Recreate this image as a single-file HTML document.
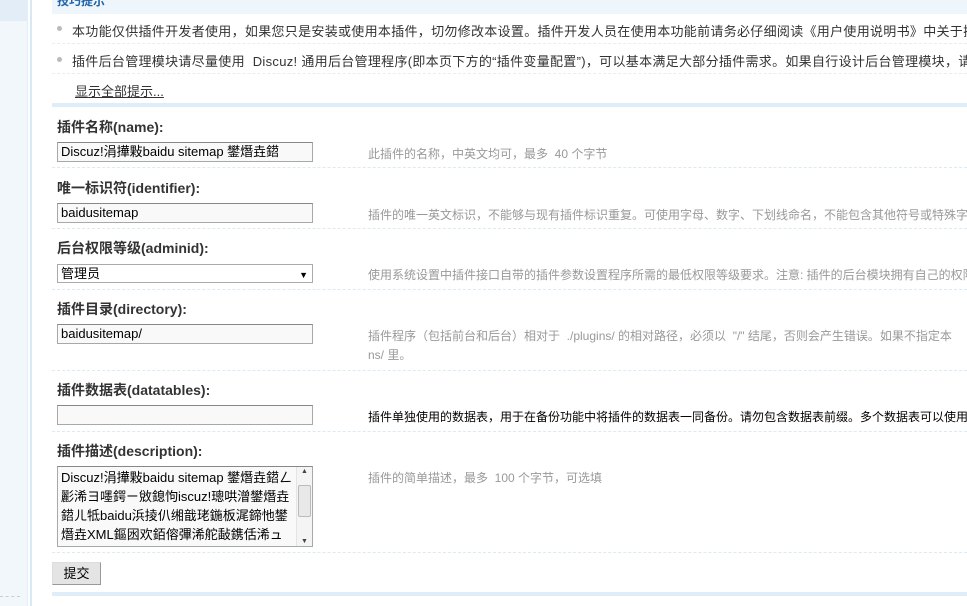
<!DOCTYPE html>
<html><head><meta charset="utf-8"><style>
*{margin:0;padding:0;box-sizing:border-box}
html,body{width:967px;height:606px;overflow:hidden}
body{background:#fff;font:12px "Liberation Sans","Noto Sans CJK SC","WenQuanYi Zen Hei",sans-serif;color:#333}
#w{position:relative;width:967px;height:606px;overflow:hidden}
.abs{position:absolute;white-space:nowrap}
.left{position:absolute;left:0;top:0;width:27px;height:606px;background:#f2f7fc}
.left .top{height:21px;background:#e2edf8}
.vline{position:absolute;left:27px;top:0;width:5px;height:606px;background:#fff;border-left:1px solid #e4eef8;border-right:2px solid #d8e8f6}
.sep{position:absolute;left:52px;right:0;border-top:1px dashed #dceaf4;height:0}
.lbl{position:absolute;left:57px;font-weight:bold;color:#333;font-size:14px;white-space:nowrap}
.inp{position:absolute;left:57px;width:256px;height:20px;border:1px solid #a8a8a8;border-top-color:#888;background:#f9f9f9;padding:1px 3px;font-size:13px;color:#000;white-space:nowrap;overflow:hidden;line-height:16px}
.hint{position:absolute;left:368px;color:#999;white-space:nowrap}
.bul{position:absolute;left:57px;width:5px;height:5px;border-radius:50%;background:#bbb}
</style></head><body><div id="w">
<div class="left"><div class="top"></div></div>
<div class="vline"></div>
<div class="abs" style="left:0;top:596px;width:20px;border-top:1px dashed #ccc"></div>
<div style="position:absolute;left:52px;top:0;right:0;height:14px;background:#eef5fb"></div>
<div class="abs" style="left:57px;top:-8px;color:#2366a8;font-weight:bold">技巧提示</div>
<div class="bul" style="top:26px"></div>
<div class="abs" style="left:72px;top:21px;font-size:13px;letter-spacing:0.3px">本功能仅供插件开发者使用，如果您只是安装或使用本插件，切勿修改本设置。插件开发人员在使用本功能前请务必仔细阅读《用户使用说明书》中关于插件设计部分的文</div>
<div class="sep" style="top:43px;border-top-color:#e6eef4"></div>
<div class="bul" style="top:57px"></div>
<div class="abs" style="left:72px;top:51px;font-size:13px;letter-spacing:0.3px">插件后台管理模块请尽量使用 &nbsp;Discuz! 通用后台管理程序(即本页下方的“插件变量配置”)，可以基本满足大部分插件需求。如果自行设计后台管理模块，请确保进行安全</div>
<div class="sep" style="top:73px;border-top-color:#e6eef4"></div>
<div class="abs" style="left:75px;top:81px;text-decoration:underline;font-size:13px">显示全部提示...</div>
<div style="position:absolute;left:52px;right:0;top:103px;height:4px;background:#deedf8"></div>

<div class="lbl" style="top:117px">插件名称(name):</div>
<div class="inp" style="top:142px">Discuz!涓撶敤baidu sitemap 鐢熸垚鍣</div>
<div class="hint" style="top:145px">此插件的名称，中英文均可，最多 &nbsp;40 个字节</div>
<div class="sep" style="top:167px"></div>

<div class="lbl" style="top:178px">唯一标识符(identifier):</div>
<div class="inp" style="top:203px">baidusitemap</div>
<div class="hint" style="top:206px">插件的唯一英文标识，不能够与现有插件标识重复。可使用字母、数字、下划线命名，不能包含其他符号或特殊字</div>
<div class="sep" style="top:228px"></div>

<div class="lbl" style="top:238px">后台权限等级(adminid):</div>
<div class="inp" style="top:264px;height:19px;background:#fff;border-color:#aaa;padding-top:1px">管理员<span style="position:absolute;right:4px;top:2px;font-size:9px">▼</span></div>
<div class="hint" style="top:266px">使用系统设置中插件接口自带的插件参数设置程序所需的最低权限等级要求。注意: 插件的后台模块拥有自己的权限</div>
<div class="sep" style="top:289px"></div>

<div class="lbl" style="top:299px">插件目录(directory):</div>
<div class="inp" style="top:324px">baidusitemap/</div>
<div class="hint" style="top:327px">插件程序（包括前台和后台）相对于 &nbsp;./plugins/ 的相对路径，必须以 &nbsp;"/" 结尾，否则会产生错误。如果不指定本</div>
<div class="hint" style="top:346px">ns/ 里。</div>
<div class="sep" style="top:370px"></div>

<div class="lbl" style="top:380px">插件数据表(datatables):</div>
<div class="inp" style="top:405px"></div>
<div class="hint" style="top:408px;color:#000">插件单独使用的数据表，用于在备份功能中将插件的数据表一同备份。请勿包含数据表前缀。多个数据表可以使用</div>
<div class="sep" style="top:431px"></div>

<div class="lbl" style="top:441px">插件描述(description):</div>
<div class="inp" style="top:466px;height:81px;white-space:normal;line-height:19px;padding-right:18px;font-size:13px;word-break:break-all">Discuz!涓撶敤baidu sitemap 鐢熸垚鍣ㄥ彲浠ヨ嚜鍔ㄧ敓鎴怐iscuz!璁哄潧鐢熸垚鍣ㄦ牴baidu浜掕仈缃戠珯鍦板浘鍗忚鐢熸垚XML鏂囦欢銆傛彃浠舵敮鎸佸浠ュ強鍖呮嫭鏁版嵁缁撴瀯</div>
<div style="position:absolute;left:296px;top:467px;width:16px;height:79px;background:#f4f4f4;border-left:1px solid #e4e4e4">
<div style="position:absolute;top:1px;left:4px;font-size:7px;color:#444">▲</div>
<div style="position:absolute;top:18px;left:1px;width:13px;height:32px;background:#e8e8e8;border:1px solid #bbb;border-radius:2px"></div>
<div style="position:absolute;bottom:1px;left:4px;font-size:7px;color:#444">▼</div></div>
<div class="hint" style="top:469px">插件的简单描述，最多 &nbsp;100 个字节，可选填</div>
<div class="sep" style="top:552px"></div>

<div class="abs" style="left:52px;top:562px;width:49px;height:23px;background:#e4e4e4;border:1px solid #999;border-top-color:#ddd;border-left-color:#ddd;text-align:center;line-height:21px;font-size:13px;color:#000">提交</div>
<div style="position:absolute;left:52px;right:0;top:592px;height:4px;background:#deedf8"></div>
</div></body></html>
